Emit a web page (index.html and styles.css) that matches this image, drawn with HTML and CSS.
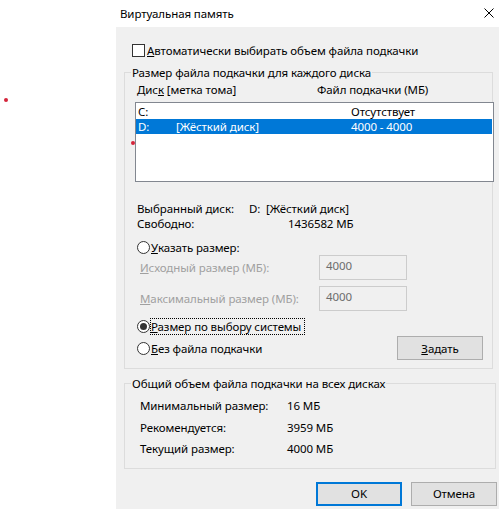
FILE: index.html
```html
<!DOCTYPE html>
<html lang="ru">
<head>
<meta charset="utf-8">
<title>Виртуальная память</title>
<link rel="stylesheet" href="styles.css">
</head>
<body>
<div class="page">
  <div class="window">
    <div class="titlebar">
      <span class="title">Виртуальная память</span>
      <svg class="close" width="10" height="10" viewBox="0 0 10 10"><path d="M0.5 0.5 L9.5 9.5 M9.5 0.5 L0.5 9.5" stroke="#000" stroke-width="1" fill="none"/></svg>
    </div>
    <div class="client">
      <label class="check-row">
        <span class="checkbox"></span>
        <span><u>А</u>втоматически выбирать объем файла подкачки</span>
      </label>

      <fieldset class="group group-disks">
        <legend>Размер файла подкачки для каждого диска</legend>
        <div class="list-head">
          <span class="col1">Дис<u>к</u> [метка тома]</span>
          <span class="col2">Файл подкачки (МБ)</span>
        </div>
        <div class="listbox">
          <div class="row">
            <span class="c-drive">C:</span><span class="c-label"></span><span class="c-size">Отсутствует</span>
          </div>
          <div class="row selected">
            <span class="c-drive">D:</span><span class="c-label">[Жёсткий диск]</span><span class="c-size">4000 - 4000</span>
          </div>
        </div>
        <div class="info">
          <div class="info-row"><span class="info-k">Выбранный диск:</span><span>D:&nbsp; [Жёсткий диск]</span></div>
          <div class="info-row"><span class="info-k">Свободно:</span><span class="free">1436582 МБ</span></div>
        </div>
        <div class="radio-row r-custom">
          <span class="radio"></span><span><u>У</u>казать размер:</span>
        </div>
        <div class="field-row f-first">
          <span class="field-label"><u>И</u>сходный размер (МБ):</span>
          <span class="input">4000</span>
        </div>
        <div class="field-row f-second">
          <span class="field-label"><u>М</u>аксимальный размер (МБ):</span>
          <span class="input">4000</span>
        </div>
        <div class="radio-row r-system">
          <span class="radio checked"></span><span class="focus"><u>Р</u>азмер по выбору системы</span>
        </div>
        <div class="last-row">
          <div class="radio-row">
            <span class="radio"></span><span><u>Б</u>ез файла подкачки</span>
          </div>
          <span class="button set"><u>З</u>адать</span>
        </div>
      </fieldset>

      <fieldset class="group group-total">
        <legend>Общий объем файла подкачки на всех дисках</legend>
        <div class="total-row"><span class="total-k">Минимальный размер:</span><span>16 МБ</span></div>
        <div class="total-row"><span class="total-k">Рекомендуется:</span><span>3959 МБ</span></div>
        <div class="total-row"><span class="total-k">Текущий размер:</span><span>4000 МБ</span></div>
      </fieldset>

      <div class="buttons">
        <span class="button default">OK</span>
        <span class="button">Отмена</span>
      </div>
    </div>
  </div>
  <span class="dot dot-a"></span>
  <span class="dot dot-b"></span>
</div>
</body>
</html>
```

FILE: styles.css
```css
html, body {
  margin: 0;
  padding: 0;
  background: #fff;
  overflow: hidden;
}
body {
  width: 499px;
  height: 509px;
  font-family: "Noto Sans", "Liberation Sans", sans-serif;
  font-size: 11.5px;
  letter-spacing: -0.1px;
  line-height: 15px;
  color: #000;
}
u { text-decoration: underline; text-underline-offset: 1px; }

.page {
  position: relative;
  padding-left: 116px;
  height: 509px;
}
.window {
  width: 383px;
  height: 509px;
  display: flex;
  flex-direction: column;
}
.titlebar {
  height: 27px;
  background: #fff;
  display: flex;
  align-items: center;
  justify-content: space-between;
  padding: 0 5px 0 4px;
  flex: none;
}
.title { font-size: 11.5px; }
.close { margin-top: -2px; }

.client {
  flex: 1;
  background: #f0f0f0;
  padding: 17px 0 0 8px;
}

.check-row {
  display: flex;
  align-items: center;
  gap: 2px;
  padding-left: 8px;
  height: 13px;
}
.checkbox {
  width: 11px;
  height: 11px;
  border: 1px solid #333;
  background: #fff;
  flex: none;
}

.group {
  margin: 0;
  padding: 0 0 0 12px;
  border: 1px solid #dcdcdc;
  width: 355px;
  min-width: 0;
}
.group legend {
  padding: 0 1px;
  margin-left: -6px;
  line-height: 15px;
}
.group-disks {
  margin-top: 8px;
  padding-bottom: 8px;
}

.list-head {
  display: flex;
  padding-top: 2px;
}
.list-head .col1 { width: 180px; }

.listbox {
  margin-top: 5px;
  margin-left: -2px;
  width: 357px;
  height: 77px;
  border: 1px solid #828790;
  background: #fff;
  padding-top: 1px;
}
.row {
  display: flex;
  height: 15px;
  padding-left: 2px;
  margin-right: 1px;
}
.row.selected {
  background: #0078d7;
  color: #fff;
}
.c-drive { width: 38px; }
.c-label { width: 175px; }

.info { margin-top: 19px; }
.info-row { display: flex; height: 15px; }
.info-k { width: 112px; }
.free { margin-left: 39px; }

.radio-row {
  display: flex;
  align-items: center;
  gap: 1px;
  height: 15px;
}
.radio {
  width: 11px;
  height: 11px;
  border: 1px solid #333;
  border-radius: 50%;
  background: #fff;
  flex: none;
  display: flex;
  align-items: center;
  justify-content: center;
}
.radio.checked::after {
  content: "";
  width: 7px;
  height: 7px;
  border-radius: 50%;
  background: #333;
}
.r-custom { margin-top: 9px; }

.field-row {
  display: flex;
  align-items: center;
  height: 25px;
  padding-left: 3px;
  color: #a0a0a0;
}
.field-label { width: 179px; }
.input {
  width: 80px;
  height: 23px;
  border: 1px solid #cccccc;
  background: #f0f0f0;
  color: #6d6d6d;
  padding-left: 6px;
  line-height: 20px;
}
.f-second { margin-top: 6px; }

.r-system { margin-top: 8px; }
.focus {
  outline: 1px dotted #000;
  outline-offset: 0;
  padding-right: 3px;
}

.last-row {
  display: flex;
  align-items: center;
  justify-content: space-between;
  margin-top: 2px;
  width: 346px;
}
.button {
  display: flex;
  align-items: center;
  justify-content: center;
  width: 84px;
  height: 22px;
  border: 1px solid #adadad;
  background: #e1e1e1;
  flex: none;
}

.group-total {
  margin-top: 7px;
  padding-top: 4px;
  padding-bottom: 8px;
  padding-left: 15px;
}
.group-total legend { margin-left: -9px; }
.total-row {
  display: flex;
  align-items: center;
  height: 21.5px;
}
.total-k { width: 147px; }

.buttons {
  display: flex;
  justify-content: flex-end;
  gap: 9px;
  margin-top: 13px;
  padding-right: 2px;
}
.button.default {
  border: 2px solid #0078d7;
  width: 82px;
  height: 20px;
}

.dot {
  position: absolute;
  width: 4px;
  height: 4px;
  border-radius: 50%;
  background: #d4243a;
}
.dot-a { left: 4px; top: 98px; }
.dot-b { left: 131px; top: 141px; }
```
